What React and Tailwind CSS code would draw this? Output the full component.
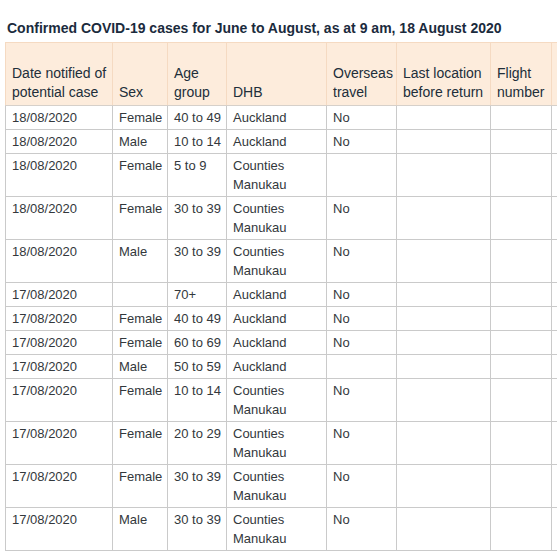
import React from "react";

const rows = [
  ["18/08/2020", "Female", "40 to 49", "Auckland", "No"],
  ["18/08/2020", "Male", "10 to 14", "Auckland", "No"],
  ["18/08/2020", "Female", "5 to 9", "Counties Manukau", ""],
  ["18/08/2020", "Female", "30 to 39", "Counties Manukau", "No"],
  ["18/08/2020", "Male", "30 to 39", "Counties Manukau", "No"],
  ["17/08/2020", "", "70+", "Auckland", "No"],
  ["17/08/2020", "Female", "40 to 49", "Auckland", "No"],
  ["17/08/2020", "Female", "60 to 69", "Auckland", "No"],
  ["17/08/2020", "Male", "50 to 59", "Auckland", ""],
  ["17/08/2020", "Female", "10 to 14", "Counties Manukau", "No"],
  ["17/08/2020", "Female", "20 to 29", "Counties Manukau", "No"],
  ["17/08/2020", "Female", "30 to 39", "Counties Manukau", "No"],
  ["17/08/2020", "Male", "30 to 39", "Counties Manukau", "No"],
];

const widths = [107, 55, 59, 100, 70, 94, 61, 60];

function Dhb({ v }) {
  if (v === "Counties Manukau") {
    return (
      <>
        Counties
        <br />
        Manukau
      </>
    );
  }
  return v;
}

export default function App() {
  return (
    <div className="w-[557px] h-[554px] overflow-hidden bg-white font-['Liberation_Sans',Arial,sans-serif]">
      <div className="pl-[7px] pt-[19px] h-[42px] text-[14px] leading-[19px] font-bold text-[#1b2b3d]">
        Confirmed COVID-19 cases for June to August, as at 9 am, 18 August 2020
      </div>
      <div className="pl-[5px]">
        <table className="table-fixed border-collapse w-[606px]">
          <colgroup>
            {widths.map((w, i) => (
              <col key={i} style={{ width: w }} />
            ))}
          </colgroup>
          <thead>
            <tr className="bg-[#fdecdc] h-[63px]">
              {[
                ["Date notified of", "potential case"],
                ["Sex"],
                ["Age", "group"],
                ["DHB"],
                ["Overseas", "travel"],
                ["Last location", "before return"],
                ["Flight", "number"],
                [""],
              ].map((lines, i) => (
                <th
                  key={i}
                  className="align-bottom text-left font-normal text-[14px] leading-[19px] text-[#212e3a] px-[6px] pb-[3px] pt-0 border-x border-t border-[#f5dac2] border-b border-b-[#d6d0ca] whitespace-nowrap"
                >
                  {lines.map((l, j) => (
                    <div key={j}>{l || "\u00a0"}</div>
                  ))}
                </th>
              ))}
            </tr>
          </thead>
          <tbody>
            {rows.map((r, i) => (
              <tr key={i}>
                {[r[0], r[1], r[2], r[3], r[4], "", "", ""].map((c, j) => (
                  <td
                    key={j}
                    className="align-top text-[13px] leading-[19px] text-[#33383c] px-[6px] pt-[2px] pb-[2px] border border-[#cacaca] whitespace-nowrap"
                  >
                    {j === 3 ? <Dhb v={c} /> : c || "\u00a0"}
                  </td>
                ))}
              </tr>
            ))}
          </tbody>
        </table>
      </div>
    </div>
  );
}
